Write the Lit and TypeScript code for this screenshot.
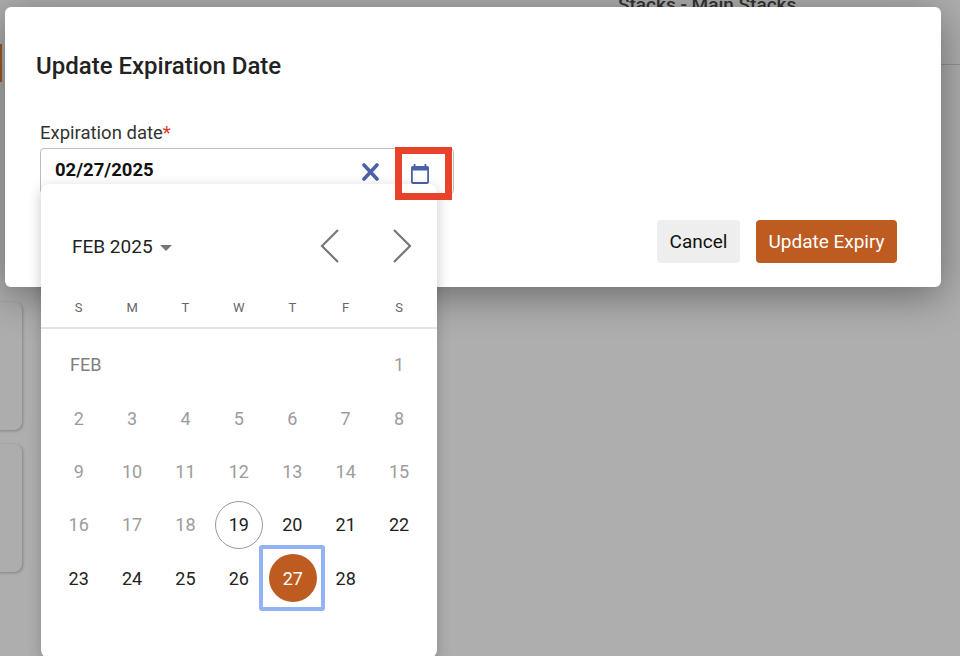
import { css, html, LitElement } from 'lit'
import { customElement } from 'lit/decorators.js'
import { classMap } from 'lit/directives/class-map.js'

const WEEKDAYS = ['S', 'M', 'T', 'W', 'T', 'F', 'S']
const FIRST_ENABLED_DAY = 19
const TODAY = 19
const SELECTED = 27

@customElement('app-root')
export class AppRoot extends LitElement {
  static styles = css`
    :host {
      display: block;
      font-family: Roboto, 'Liberation Sans', sans-serif;
    }

    .page {
      position: relative;
      display: flex;
      height: 656px;
      overflow: hidden;
      background: #aeaeae;
    }

    /* dimmed page behind the modal */
    .side {
      width: 22px;
      flex: none;
      display: flex;
      flex-direction: column;
      padding-top: 44px;
    }

    .accent {
      width: 2px;
      height: 38px;
      background: #a05a28;
    }

    .side-card {
      height: 128px;
      margin-left: -20px;
      border-radius: 8px;
      background: #adadad;
      box-shadow: 1px 1px 3px rgba(0, 0, 0, 0.25);
    }

    .side-card.first {
      margin-top: 220px;
    }

    .side-card + .side-card {
      margin-top: 14px;
    }

    .main {
      flex: 1;
    }

    .topbar {
      height: 64px;
      overflow: hidden;
      border-bottom: 1px solid #939393;
      padding-left: 596px;
    }

    .topbar span {
      display: block;
      margin-top: -7px;
      font-size: 19px;
      line-height: 24px;
      font-weight: 500;
      color: #333;
    }

    .modal {
      position: absolute;
      left: 5px;
      top: 7px;
      width: 936px;
      height: 280px;
      box-sizing: border-box;
      display: flex;
      flex-direction: column;
      padding: 43px 44px 24px 31px;
      background: #fff;
      border-radius: 6px;
      box-shadow: 0 8px 40px rgba(0, 0, 0, 0.4);
    }

    h2 {
      margin: 0;
      font-size: 24px;
      line-height: 32px;
      font-weight: 500;
      color: #222;
    }

    .field {
      position: relative;
      width: 414px;
      margin: 40px 0 0 4px;
    }

    label {
      display: block;
      font-size: 18.5px;
      line-height: 22px;
      color: #333;
    }

    label b {
      font-weight: 400;
      color: #e53224;
    }

    .input {
      display: flex;
      align-items: center;
      box-sizing: border-box;
      height: 46px;
      margin-top: 4px;
      padding: 0 0 2px 14px;
      border: 1px solid #bdbdbd;
      border-radius: 4px;
      font-size: 18.5px;
      font-weight: 700;
      color: #111;
    }

    .input span {
      flex: 1;
    }

    .clear {
      display: block;
      margin: 4px 32px 0 0;
      color: #4a63a8;
    }

    .cal-btn {
      display: block;
      width: 18px;
      height: 20px;
      margin: 7px 24px 0 0;
      fill: #4a63a8;
    }

    /* red annotation box, sits on top of the open picker */
    .callout {
      position: absolute;
      left: 355px;
      top: 25px;
      width: 57px;
      height: 53px;
      box-sizing: border-box;
      border: 7px solid #e8432a;
    }

    .picker {
      position: absolute;
      left: 1px;
      top: 62px;
      width: 396px;
      height: 474px;
      background: #fff;
      border-radius: 8px;
      box-shadow: 0 4px 14px rgba(0, 0, 0, 0.22);
    }

    .picker-head {
      display: flex;
      align-items: center;
      height: 113px;
      box-sizing: border-box;
      padding: 11px 25px 0 31px;
    }

    .month {
      font-size: 19px;
      color: #222;
    }

    .caret {
      width: 0;
      height: 0;
      margin: 3px 0 0 7.5px;
      border-left: 6px solid transparent;
      border-right: 6px solid transparent;
      border-top: 6px solid #777;
    }

    .nav {
      margin-left: auto;
      display: flex;
      gap: 52px;
    }

    .nav svg {
      display: block;
      width: 20px;
      height: 34px;
      fill: none;
      stroke: #777;
      stroke-width: 2.2;
    }

    .weekdays,
    .days {
      display: grid;
      grid-template-columns: repeat(7, 53.4px);
      padding: 0 11px;
    }

    .weekdays {
      height: 20px;
      align-items: center;
      padding-bottom: 10px;
      border-bottom: 2px solid #e4e4e4;
      font-size: 13px;
      color: #666;
      text-align: center;
    }

    .days {
      grid-auto-rows: 53.4px;
      padding-top: 9px;
    }

    .cell {
      position: relative;
      display: flex;
      align-items: center;
      justify-content: center;
      font-size: 18px;
      color: #9c9c9c;
    }

    .cell.on {
      color: #222;
    }

    .month-tag {
      padding-left: 14px;
      font-size: 18px;
      color: #808080;
    }

    .cell.today span {
      display: flex;
      align-items: center;
      justify-content: center;
      width: 48px;
      height: 48px;
      box-sizing: border-box;
      border: 1px solid #999;
      border-radius: 50%;
    }

    .cell.selected {
      color: #fff;
    }

    .cell.selected span {
      display: flex;
      align-items: center;
      justify-content: center;
      width: 48px;
      height: 48px;
      margin-left: 1px;
      border-radius: 50%;
      background: #bd5b21;
    }

    .cell.selected::after {
      content: '';
      position: absolute;
      left: -6.5px;
      top: -6.5px;
      width: 66px;
      height: 66px;
      box-sizing: border-box;
      border: 4px solid #93b3f5;
      border-radius: 3px;
    }

    .actions {
      display: flex;
      justify-content: flex-end;
      gap: 16px;
      margin-top: auto;
    }

    button {
      height: 43px;
      border: 0;
      border-radius: 4px;
      font: 400 19px Roboto, 'Liberation Sans', sans-serif;
    }

    .cancel {
      width: 83px;
      background: #eeeeee;
      color: #111;
    }

    .update {
      width: 141px;
      background: #bd5b21;
      color: #fff;
    }
  `

  private renderDay(day: number) {
    const classes = {
      cell: true,
      on: day >= FIRST_ENABLED_DAY,
      today: day === TODAY,
      selected: day === SELECTED,
    }
    return html`<div class=${classMap(classes)}><span>${day}</span></div>`
  }

  private renderPicker() {
    const days = Array.from({ length: 28 }, (_, i) => i + 1)
    return html`
      <div class="picker">
        <div class="picker-head">
          <span class="month">FEB 2025</span>
          <span class="caret"></span>
          <div class="nav">
            <svg viewBox="0 0 20 34"><path d="M18 1 2 17l16 16" /></svg>
            <svg viewBox="0 0 20 34"><path d="m2 1 16 16L2 33" /></svg>
          </div>
        </div>
        <div class="weekdays">${WEEKDAYS.map((d) => html`<span>${d}</span>`)}</div>
        <div class="days">
          <div class="cell month-tag">FEB</div>
          ${Array.from({ length: 5 }, () => html`<div class="cell"></div>`)}
          ${days.map((d) => this.renderDay(d))}
        </div>
      </div>
    `
  }

  protected render() {
    return html`
      <div class="page">
        <div class="side">
          <div class="accent"></div>
          <div class="side-card first"></div>
          <div class="side-card"></div>
        </div>
        <div class="main">
          <div class="topbar"><span>Stacks - Main Stacks</span></div>
        </div>
        <div class="modal">
          <h2>Update Expiration Date</h2>
          <div class="field">
            <label>Expiration date<b>*</b></label>
            <div class="input">
              <span>02/27/2025</span>
              <svg class="clear" width="17" height="18" viewBox="0 0 17 18">
                <path
                  d="M2 2l13 14M15 2 2 16"
                  fill="none"
                  stroke="currentColor"
                  stroke-width="3.6"
                  stroke-linecap="round"
                />
              </svg>
              <svg class="cal-btn" viewBox="2 1 20 22">
                <path
                  d="M20 3h-1V1h-2v2H7V1H5v2H4c-1.1 0-2 .9-2 2v16c0 1.1.9 2 2 2h16c1.1 0 2-.9 2-2V5c0-1.1-.9-2-2-2zm0 18H4V8h16v13z"
                />
              </svg>
            </div>
            ${this.renderPicker()}
            <div class="callout"></div>
          </div>
          <div class="actions">
            <button class="cancel">Cancel</button>
            <button class="update">Update Expiry</button>
          </div>
        </div>
      </div>
    `
  }
}

declare global {
  interface HTMLElementTagNameMap {
    'app-root': AppRoot
  }
}
